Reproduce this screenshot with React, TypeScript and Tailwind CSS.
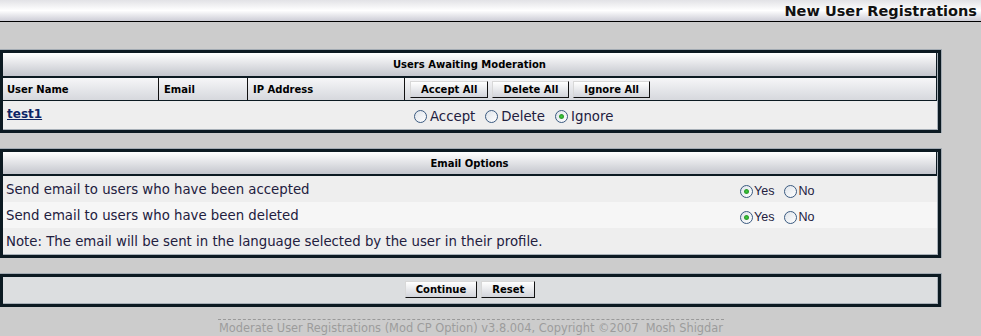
import type { ReactNode } from 'react'

const font = "font-['DejaVu_Sans',Verdana,sans-serif]"

function Panel({ children, className = '' }: { children: ReactNode; className?: string }) {
  return (
    <div className={`border-t border-r border-[#a3abb3] ${className}`}>
      <div className="border-[3px] border-[#0c1a22]">
        <div className="border-r border-b border-[#a8b0b8] bg-[#c4c9ce]">{children}</div>
      </div>
    </div>
  )
}

function Btn({ label }: { label: string }) {
  return (
    <button
      type="button"
      className="h-[17px] border border-t-[#d8d8d8] border-l-[#d8d8d8] border-r-[#111] border-b-[#111] bg-gradient-to-b from-white to-[#d2d4da] px-[10px] text-[10px] font-bold leading-[15px] text-black"
    >
      {label}
    </button>
  )
}

function Radio({ checked, label, labelClass }: { checked?: boolean; label: string; labelClass: string }) {
  return (
    <span className="flex items-center">
      <span className="flex h-[13px] w-[13px] items-center justify-center rounded-full border border-[#3a5a80] bg-gradient-to-br from-[#dfe4ea] to-white">
        {checked && <span className="h-[5px] w-[5px] rounded-full bg-[radial-gradient(circle,#3dd03d_0%,#2a9a2a_60%,#b8dcb8_100%)]" />}
      </span>
      <span className={labelClass}>{label}</span>
    </span>
  )
}

export default function App() {
  return (
    <div className={`h-[336px] w-full overflow-hidden bg-[#cccccc] ${font}`}>
      <div className="flex h-[22px] items-center justify-end border-b border-black bg-gradient-to-b from-[#e2e2e6] via-white to-[#cdcdd6] pr-[4px] pt-[2px]">
        <span className="text-[14.5px] font-bold leading-none text-[#111]">New User Registrations</span>
      </div>

      <div className="w-[942px]">
        <Panel className="mt-[27px]">
          <div className="flex h-[25px] items-center justify-center border-b-2 border-r border-[#0c1a22] bg-gradient-to-b from-white to-[#c4c6cd] text-[10px] font-bold text-black">
            Users Awaiting Moderation
          </div>
          <div className="flex h-[23px] border-b border-r border-[#0c1a22] text-[10px] font-bold text-black">
            <div className="w-[156px] border-r border-[#111] bg-gradient-to-b from-[#f6f6f8] to-[#d6d8dd] pl-[4px] pt-[4px]">User Name</div>
            <div className="w-[89px] border-r border-[#111] bg-gradient-to-b from-[#f6f6f8] to-[#d6d8dd] pl-[5px] pt-[4px]">Email</div>
            <div className="w-[157px] border-r border-[#111] bg-gradient-to-b from-[#f6f6f8] to-[#d6d8dd] pl-[5px] pt-[4px]">IP Address</div>
            <div className="flex flex-1 items-center gap-[4px] bg-gradient-to-b from-[#f6f6f8] to-[#d6d8dd] pl-[5px] pt-[1px]">
              <Btn label="Accept All" />
              <Btn label="Delete All" />
              <Btn label="Ignore All" />
            </div>
          </div>
          <div className="flex h-[28px] items-center bg-[#eeeeee]">
            <a href="#" className="w-[402px] pl-[4px] pb-[3px] text-[12px] font-bold text-[#0d2464] underline">test1</a>
            <div className="flex items-center gap-[10px] pl-[9px] pt-[3px] text-[13.3px] text-[#22203e]">
              <Radio label="Accept" labelClass="ml-[3px]" />
              <Radio label="Delete" labelClass="ml-[3px]" />
              <Radio checked label="Ignore" labelClass="ml-[3px]" />
            </div>
          </div>
        </Panel>

        <Panel className="mt-[15px]">
          <div className="flex h-[24px] items-center justify-center border-b-2 border-r border-[#0c1a22] bg-gradient-to-b from-white to-[#c4c6cd] text-[10px] font-bold text-black">
            Email Options
          </div>
          {[
            { text: 'Send email to users who have been accepted', bg: 'bg-[#eeeeee]', radios: true },
            { text: 'Send email to users who have been deleted', bg: 'bg-[#f6f6f6]', radios: true },
            { text: 'Note: The email will be sent in the language selected by the user in their profile.', bg: 'bg-[#eeeeee]', radios: false },
          ].map((row) => (
            <div key={row.text} className={`flex h-[26px] items-center ${row.bg} text-[13.3px] text-[#22203e]`}>
              <div className="w-[733px] shrink-0 whitespace-nowrap pl-[3px] pt-[1px]">{row.text}</div>
              {row.radios && (
                <div className="flex items-center gap-[10px] pl-[4px] pt-[4px] font-['Liberation_Sans',Arial,sans-serif] text-[12.5px]">
                  <Radio checked label="Yes" labelClass="ml-[1px]" />
                  <Radio label="No" labelClass="ml-[1px]" />
                </div>
              )}
            </div>
          ))}
        </Panel>

        <Panel className="mt-[15px]">
          <div className="flex h-[26px] items-center justify-center gap-[4px] bg-[#dcdee0] pb-[1px]">
            <Btn label="Continue" />
            <Btn label="Reset" />
          </div>
        </Panel>

        <div className="mt-[12px] flex justify-center">
          <div className="border-t border-dashed border-[#999999] px-[1px] pt-[1px] text-[11.4px] leading-[14px] text-[#9c9c9c]">
            Moderate User Registrations (Mod CP Option) v3.8.004, Copyright ©2007&nbsp; Mosh Shigdar
          </div>
        </div>
      </div>
    </div>
  )
}
